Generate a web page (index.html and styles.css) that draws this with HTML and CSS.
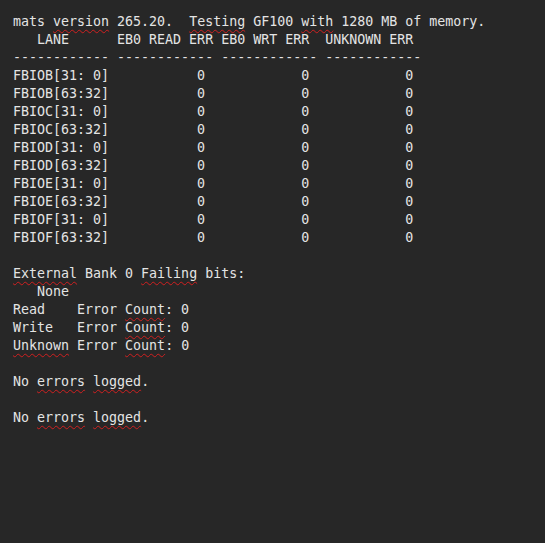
FILE: index.html
```html
<!DOCTYPE html>
<html>
<head>
<meta charset="utf-8">
<link rel="stylesheet" href="styles.css">
</head>
<body>
<main class="editor">
<pre class="output">mats <span class="sp">version</span> 265.20.  <span class="sp">Testing</span> GF100 <span class="sp">with</span> 1280 MB of memory.
   LANE      EB0 READ ERR EB0 WRT ERR  UNKNOWN ERR
------------ ------------ ------------ ------------
FBIOB[31: 0]           0            0            0
FBIOB[63:32]           0            0            0
FBIOC[31: 0]           0            0            0
FBIOC[63:32]           0            0            0
FBIOD[31: 0]           0            0            0
FBIOD[63:32]           0            0            0
FBIOE[31: 0]           0            0            0
FBIOE[63:32]           0            0            0
FBIOF[31: 0]           0            0            0
FBIOF[63:32]           0            0            0

<span class="sp">External</span> Bank 0 <span class="sp">Failing</span> bits:
   None
Read    Error <span class="sp">Count</span>: 0
Write   Error <span class="sp">Count</span>: 0
<span class="sp">Unknown</span> Error <span class="sp">Count</span>: 0

No <span class="sp">errors</span> <span class="sp">logged</span>.

No <span class="sp">errors</span> <span class="sp">logged</span>.
</pre>
</main>
</body>
</html>
```

FILE: styles.css
```css
html, body {
  margin: 0;
  padding: 0;
  background: #272727;
  height: 100%;
}

.editor {
  padding: 13px 0 0 13px;
}

.output {
  margin: 0;
  font-family: "DejaVu Sans Mono", "Liberation Mono", monospace;
  font-size: 13.3px;
  line-height: 18px;
  color: #e4e4e4;
  white-space: pre;
}

.sp {
  text-decoration: underline wavy #d02020;
  text-decoration-thickness: 1px;
  text-underline-offset: 3px;
  text-decoration-skip-ink: none;
}
```
